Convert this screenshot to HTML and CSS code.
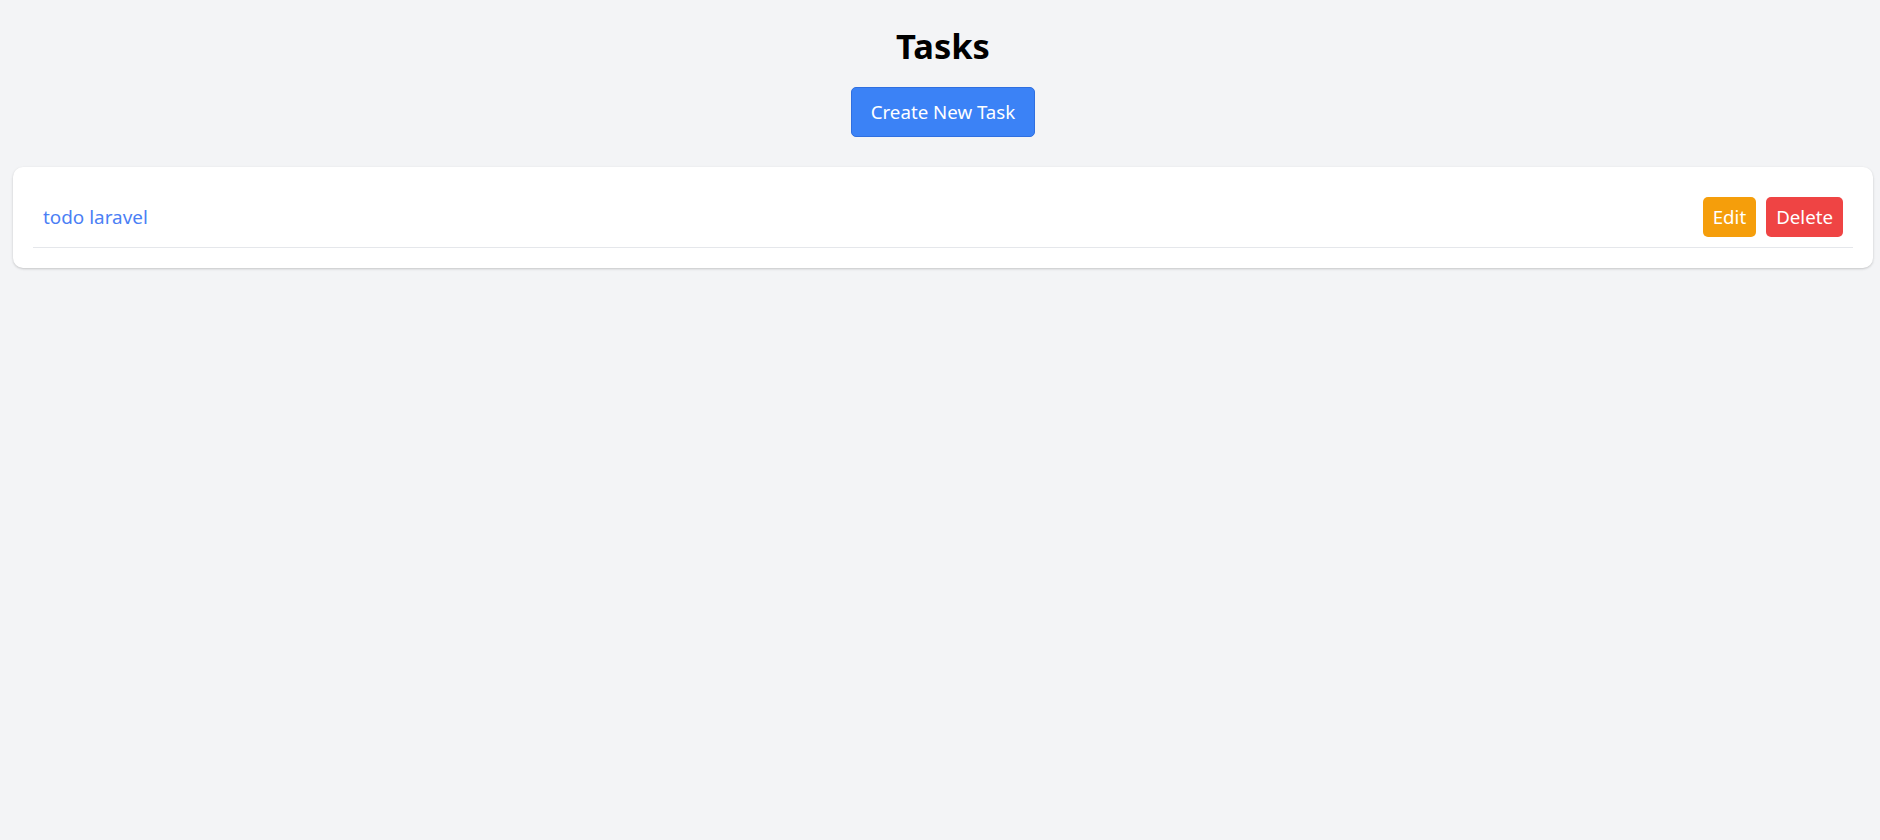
FILE: index.html
```html
<!DOCTYPE html>
<html lang="en">
<head>
<meta charset="utf-8">
<title>Tasks</title>
<link rel="stylesheet" href="styles.css">
</head>
<body>
  <main class="page">
    <h1 class="title">Tasks</h1>
    <div class="actions">
      <a class="btn btn-primary" href="#">Create New Task</a>
    </div>
    <section class="card">
      <ul class="task-list">
        <li class="task">
          <a class="task-name" href="#">todo laravel</a>
          <div class="task-actions">
            <a class="btn-sm btn-edit" href="#">Edit</a>
            <button class="btn-sm btn-delete" type="button">Delete</button>
          </div>
        </li>
      </ul>
    </section>
  </main>
</body>
</html>
```

FILE: styles.css
```css
* { box-sizing: border-box; }
html, body { margin: 0; padding: 0; }
body {
  background: #f3f4f6;
  font-family: "Noto Sans", "Open Sans", sans-serif;
  color: #000;
  width: 1880px;
  height: 840px;
}
.page {
  padding: 23px 7px 0 13px;
}
.title {
  margin: 0;
  text-align: center;
  font-size: 34.5px;
  line-height: 45px;
  font-weight: 700;
}
.actions {
  display: flex;
  justify-content: center;
  margin-top: 19px;
}
.btn {
  display: inline-block;
  text-decoration: none;
  color: #fff;
  font-size: 18.7px;
  line-height: 30px;
  padding: 10px 20px;
  border-radius: 5px;
}
.btn-primary {
  background: #3b82f6;
  border: 1px solid #2f6fe0;
  padding: 9px 19px;
}
.card {
  margin-top: 30px;
  background: #fff;
  border-radius: 10px;
  box-shadow: 0 1px 3px rgba(0,0,0,0.12), 0 1px 2px rgba(0,0,0,0.08);
  padding: 20px;
}
.task-list {
  list-style: none;
  margin: 0;
  padding: 0;
}
.task {
  display: flex;
  align-items: center;
  justify-content: space-between;
  padding: 10px;
  border-bottom: 1px solid #e5e7eb;
}
.task-name {
  color: #4b7ff5;
  text-decoration: none;
  font-size: 18.9px;
  line-height: 30px;
}
.task-actions {
  display: flex;
  gap: 10px;
}
.btn-sm {
  display: inline-block;
  border: 0;
  margin: 0;
  font-family: inherit;
  font-size: 18.7px;
  line-height: 30px;
  padding: 5px 10px;
  color: #fff;
  text-decoration: none;
  border-radius: 5px;
  cursor: pointer;
}
.btn-edit { background: #f59e0b; }
.btn-delete { background: #ef4444; }
```
